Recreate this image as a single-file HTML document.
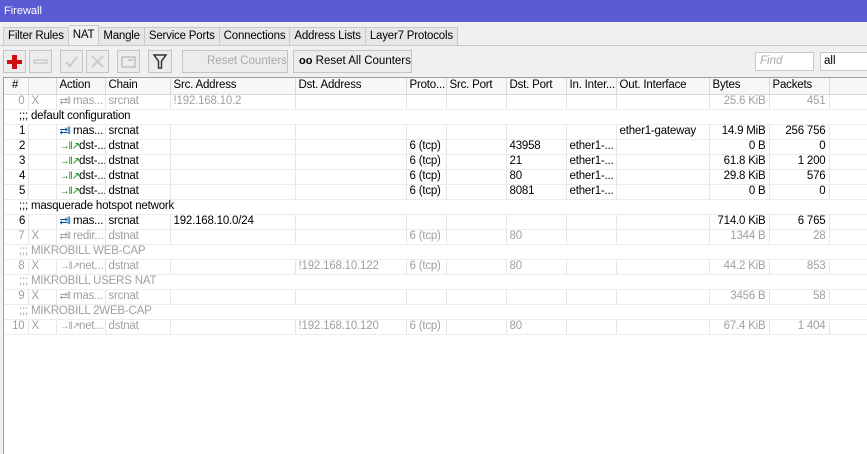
<!DOCTYPE html>
<html><head><meta charset="utf-8"><style>
*{box-sizing:border-box;margin:0;padding:0}
body{width:867px;height:454px;overflow:hidden;background:#f0f0f0;font-family:"Liberation Sans",sans-serif;font-size:11.5px;color:#000;position:relative}
.title{position:absolute;left:0;top:0;width:867px;height:22px;background:#5b5bd2;color:#fff;padding:5px 0 0 4px;font-size:11px}
.tabs{position:absolute;top:27px;left:3px;height:19px;display:flex}
.tab{height:19px;border:1px solid #c8c8c8;border-left:none;background:#e6e6e6;padding:2px 4px 0;white-space:nowrap;letter-spacing:-0.2px}
.tab:first-child{border-left:1px solid #c8c8c8}
.tab.sel{background:#f0f0f0;border-bottom-color:#f0f0f0;height:20px;margin-top:-2px;padding-top:3px}
.tabline{position:absolute;top:45px;left:0;width:867px;border-top:1px solid #c8c8c8}
.btn{position:absolute;top:50px;height:23px;border:1px solid #c4c4c4;background:#ececec;white-space:nowrap}
.tbl{position:absolute;left:3px;top:77px;width:864px;height:377px;background:#fff;border-left:1px solid #a0a0a0;border-top:1px solid #a0a0a0}
table{border-collapse:collapse;table-layout:fixed;width:864px}
tr{height:15px}
td{height:14px;line-height:13px;padding:0 3px;white-space:nowrap;overflow:hidden;border-right:1px solid #e6e6e6;border-bottom:1px solid #ececec;letter-spacing:-0.2px}
tr.h{height:16px}
tr.h td{height:15px;background:#f7f7f7;border-right:1px solid #d8d8d8;border-bottom:1px solid #d8d8d8}
tr.g td{color:#a0a0a0}
tr.c td{border-right:none}
.r{text-align:right}
.i{font-size:10px;line-height:10px;letter-spacing:-1px}
</style></head><body>
<div class="title">Firewall</div>
<div class="tabs"><div class="tab">Filter Rules</div><div class="tab sel">NAT</div><div class="tab">Mangle</div><div class="tab">Service Ports</div><div class="tab">Connections</div><div class="tab">Address Lists</div><div class="tab">Layer7 Protocols</div></div>
<div class="tabline"></div>
<div class="btn" style="left:3px;width:23px"><svg width="21" height="21"><path d="M8 4h5v5h5v4h-5v5h-5v-5h-5v-4h5z" fill="#d01010"/></svg></div>
<div class="btn" style="left:29px;width:23px"><svg width="21" height="21"><rect x="4" y="9" width="13" height="3" fill="none" stroke="#bbb"/></svg></div>
<div class="btn" style="left:60px;width:23px"><svg width="21" height="21"><path d="M5 11l4 4 7-9" fill="none" stroke="#ccc" stroke-width="2"/></svg></div>
<div class="btn" style="left:86px;width:23px"><svg width="21" height="21"><path d="M5 5l11 11M16 5L5 16" stroke="#ccc" stroke-width="2"/></svg></div>
<div class="btn" style="left:117px;width:23px"><svg width="21" height="21"><rect x="4" y="6" width="13" height="10" fill="none" stroke="#aaa"/><path d="M10 9h5" stroke="#aaa"/></svg></div>
<div class="btn" style="left:148px;width:24px"><svg width="22" height="21"><path d="M5 4h12l-4.5 6v7h-3v-7z" fill="none" stroke="#333" stroke-width="1.5"/></svg></div>
<div class="btn" style="left:182px;width:106px;color:#aaa;padding:4px 0 0 24px">Reset Counters</div>
<div class="btn" style="left:293px;width:119px;padding:4px 0 0 5px"><b style="font-size:11px">oo</b> Reset All Counters</div>
<div style="position:absolute;left:755px;top:52px;width:59px;height:19px;background:#fff;border:1px solid #c8c8c8;color:#aaa;font-style:italic;padding:2px 4px">Find</div>
<div style="position:absolute;left:820px;top:52px;width:50px;height:19px;background:#fff;border:1px solid #c8c8c8;padding:2px 3px">all</div>
<div class="tbl"><table>
<colgroup><col style="width:24px"><col style="width:28px"><col style="width:49px"><col style="width:65px"><col style="width:125px"><col style="width:111px"><col style="width:40px"><col style="width:60px"><col style="width:60px"><col style="width:50px"><col style="width:93px"><col style="width:60px"><col style="width:60px"><col></colgroup>
<tr class="h"><td style="padding-left:8px">#</td><td></td><td>Action</td><td>Chain</td><td>Src. Address</td><td>Dst. Address</td><td>Proto...</td><td>Src. Port</td><td>Dst. Port</td><td>In. Inter...</td><td>Out. Interface</td><td>Bytes</td><td>Packets</td><td></td></tr>
<tr class="g"><td class="r">0</td><td>X</td><td><span class="i">⇄‖</span> mas...</td><td>srcnat</td><td>!192.168.10.2</td><td></td><td></td><td></td><td></td><td></td><td></td><td class="r">25.6 KiB</td><td class="r">451</td><td></td></tr>
<tr class="c"><td colspan="14" style="padding-left:15px">;;; default configuration</td></tr>
<tr><td style="padding-left:15px">1</td><td></td><td><span class="i" style="color:#0050a0">⇄‖</span> mas...</td><td>srcnat</td><td></td><td></td><td></td><td></td><td></td><td></td><td>ether1-gateway</td><td class="r">14.9 MiB</td><td class="r">256 756</td><td></td></tr>
<tr><td style="padding-left:15px">2</td><td></td><td><span class="i" style="color:#080">→‖↗</span>dst-...</td><td>dstnat</td><td></td><td></td><td>6 (tcp)</td><td></td><td>43958</td><td>ether1-...</td><td></td><td class="r">0 B</td><td class="r">0</td><td></td></tr>
<tr><td style="padding-left:15px">3</td><td></td><td><span class="i" style="color:#080">→‖↗</span>dst-...</td><td>dstnat</td><td></td><td></td><td>6 (tcp)</td><td></td><td>21</td><td>ether1-...</td><td></td><td class="r">61.8 KiB</td><td class="r">1 200</td><td></td></tr>
<tr><td style="padding-left:15px">4</td><td></td><td><span class="i" style="color:#080">→‖↗</span>dst-...</td><td>dstnat</td><td></td><td></td><td>6 (tcp)</td><td></td><td>80</td><td>ether1-...</td><td></td><td class="r">29.8 KiB</td><td class="r">576</td><td></td></tr>
<tr><td style="padding-left:15px">5</td><td></td><td><span class="i" style="color:#080">→‖↗</span>dst-...</td><td>dstnat</td><td></td><td></td><td>6 (tcp)</td><td></td><td>8081</td><td>ether1-...</td><td></td><td class="r">0 B</td><td class="r">0</td><td></td></tr>
<tr class="c"><td colspan="14" style="padding-left:15px">;;; masquerade hotspot network</td></tr>
<tr><td style="padding-left:15px">6</td><td></td><td><span class="i" style="color:#0050a0">⇄‖</span> mas...</td><td>srcnat</td><td>192.168.10.0/24</td><td></td><td></td><td></td><td></td><td></td><td></td><td class="r">714.0 KiB</td><td class="r">6 765</td><td></td></tr>
<tr class="g"><td class="r">7</td><td>X</td><td><span class="i">⇄‖</span> redir...</td><td>dstnat</td><td></td><td></td><td>6 (tcp)</td><td></td><td>80</td><td></td><td></td><td class="r">1344 B</td><td class="r">28</td><td></td></tr>
<tr class="g c"><td colspan="14" style="padding-left:15px">;;; MIKROBILL WEB-CAP</td></tr>
<tr class="g"><td class="r">8</td><td>X</td><td><span class="i">→‖↗</span>net...</td><td>dstnat</td><td></td><td>!192.168.10.122</td><td>6 (tcp)</td><td></td><td>80</td><td></td><td></td><td class="r">44.2 KiB</td><td class="r">853</td><td></td></tr>
<tr class="g c"><td colspan="14" style="padding-left:15px">;;; MIKROBILL USERS NAT</td></tr>
<tr class="g"><td class="r">9</td><td>X</td><td><span class="i">⇄‖</span> mas...</td><td>srcnat</td><td></td><td></td><td></td><td></td><td></td><td></td><td></td><td class="r">3456 B</td><td class="r">58</td><td></td></tr>
<tr class="g c"><td colspan="14" style="padding-left:15px">;;; MIKROBILL 2WEB-CAP</td></tr>
<tr class="g"><td class="r">10</td><td>X</td><td><span class="i">→‖↗</span>net...</td><td>dstnat</td><td></td><td>!192.168.10.120</td><td>6 (tcp)</td><td></td><td>80</td><td></td><td></td><td class="r">67.4 KiB</td><td class="r">1 404</td><td></td></tr>
</table></div>
</body></html>
